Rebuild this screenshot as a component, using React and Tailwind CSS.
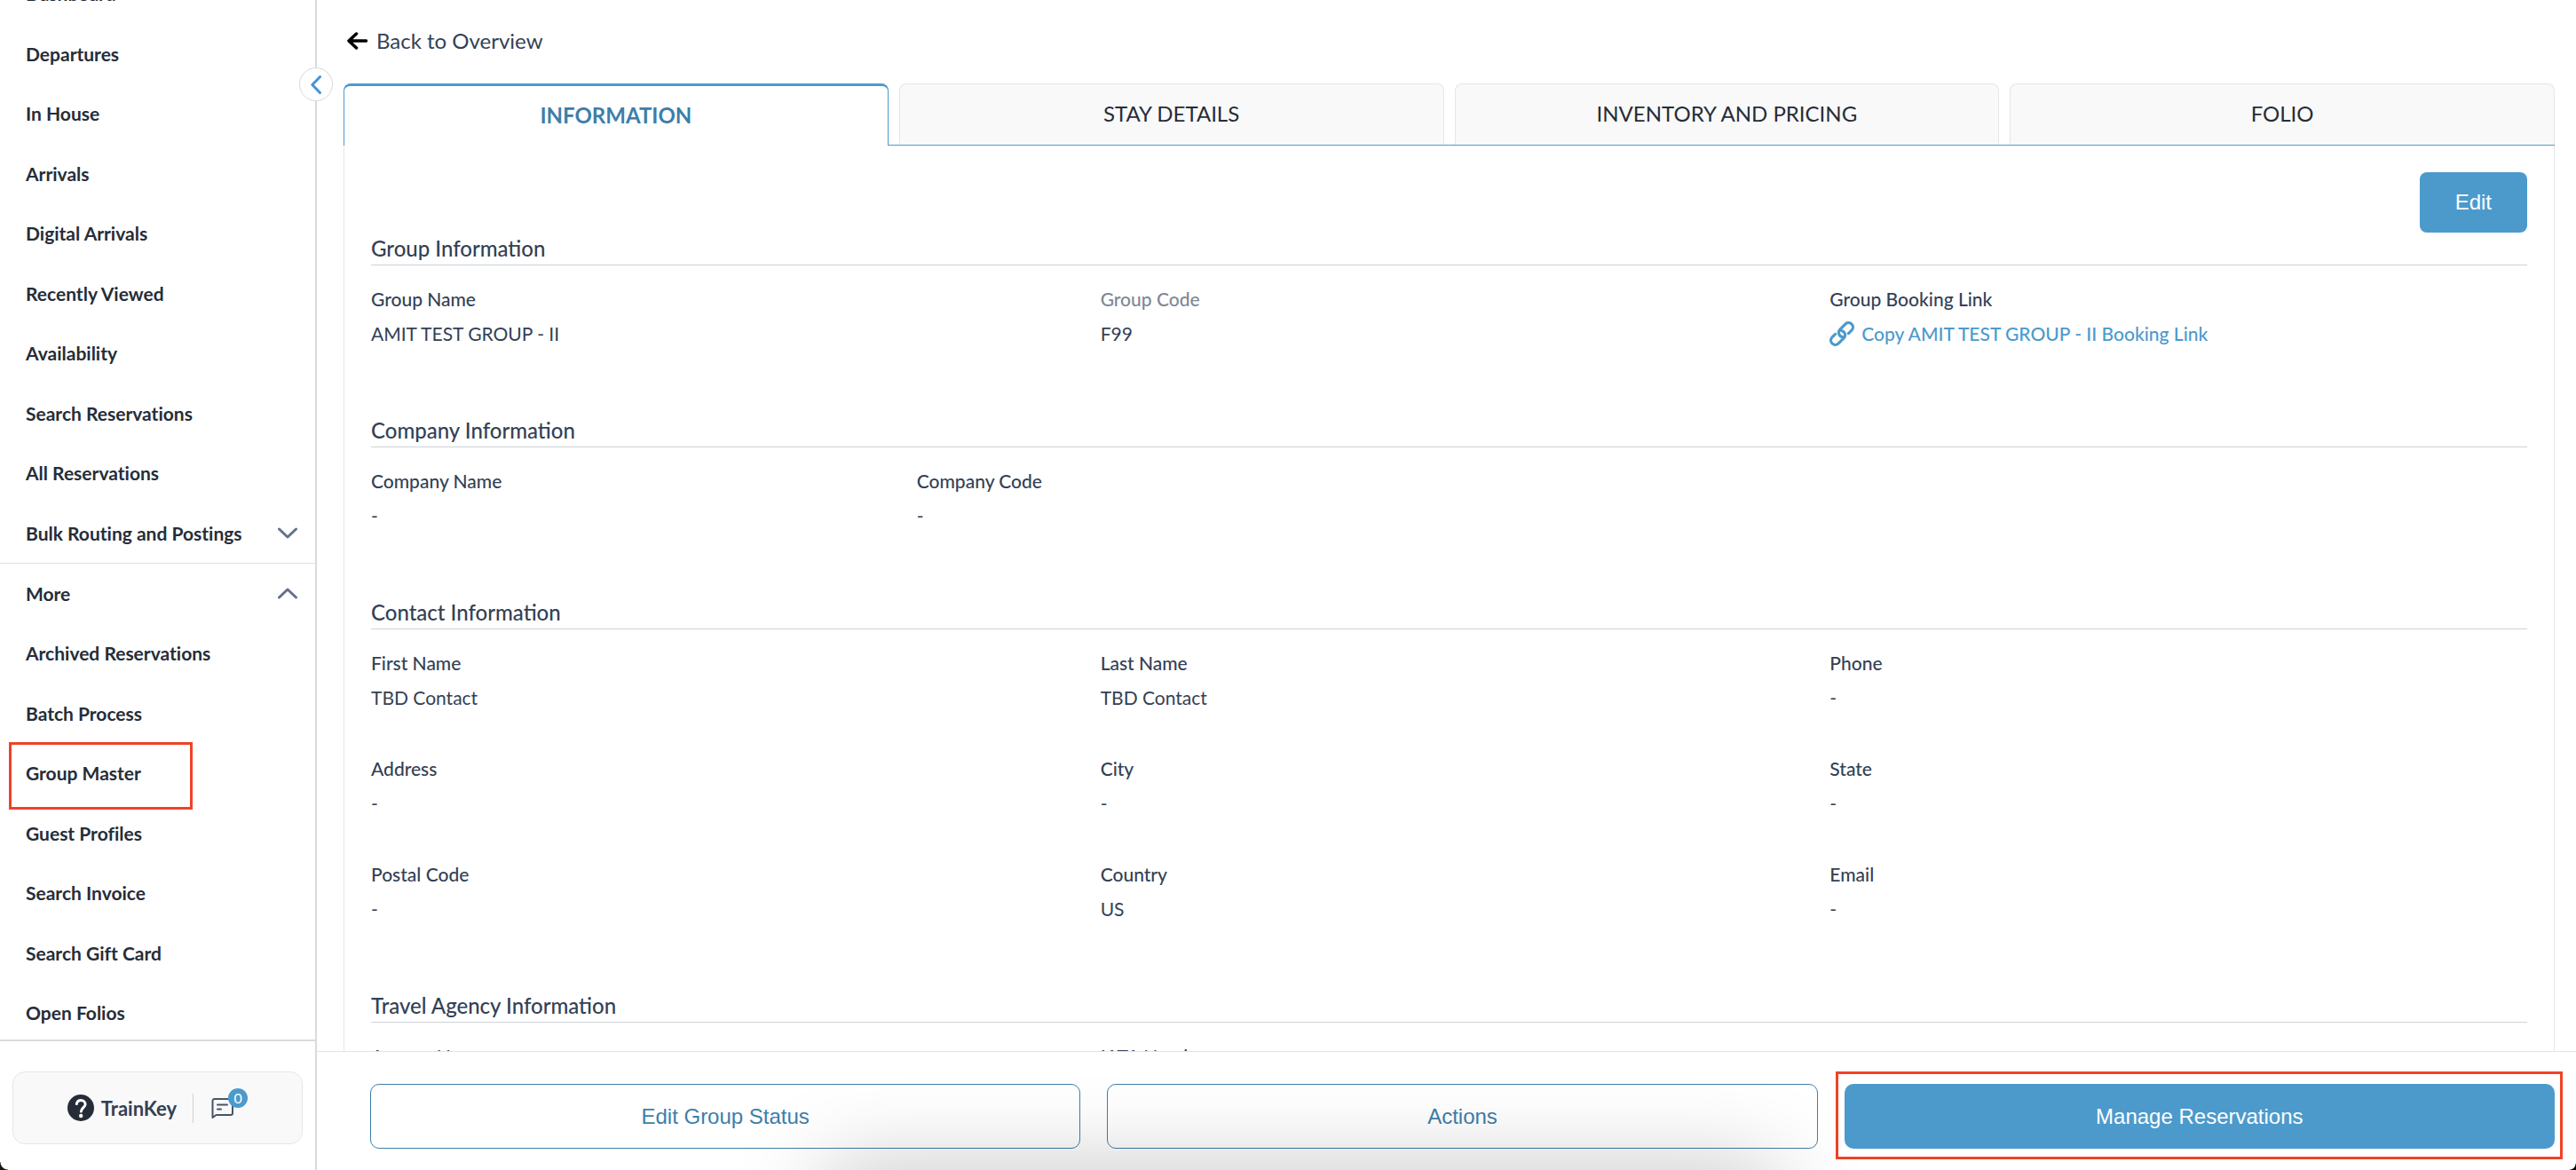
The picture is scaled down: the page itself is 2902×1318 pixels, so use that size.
import { useState } from "react";

const NAV = [
  { label: "Dashboard" },
  { label: "Departures" },
  { label: "In House" },
  { label: "Arrivals" },
  { label: "Digital Arrivals" },
  { label: "Recently Viewed" },
  { label: "Availability" },
  { label: "Search Reservations" },
  { label: "All Reservations" },
  { label: "Bulk Routing and Postings", toggle: "down", divider: true },
  { label: "More", toggle: "up" },
  { label: "Archived Reservations" },
  { label: "Batch Process" },
  { label: "Group Master", marked: true },
  { label: "Guest Profiles" },
  { label: "Search Invoice" },
  { label: "Search Gift Card" },
  { label: "Open Folios" },
];

const TABS = ["INFORMATION", "STAY DETAILS", "INVENTORY AND PRICING", "FOLIO"];

const SECTIONS = [
  {
    title: "Group Information",
    fields: [
      { label: "Group Name", value: "AMIT TEST GROUP - II" },
      { label: "Group Code", value: "F99", muted: true },
      { label: "Group Booking Link", link: "Copy AMIT TEST GROUP - II Booking Link" },
    ],
  },
  {
    title: "Company Information",
    wide: true,
    fields: [
      { label: "Company Name", value: "-" },
      { label: "Company Code", value: "-" },
    ],
  },
  {
    title: "Contact Information",
    fields: [
      { label: "First Name", value: "TBD Contact" },
      { label: "Last Name", value: "TBD Contact" },
      { label: "Phone", value: "-" },
      { label: "Address", value: "-" },
      { label: "City", value: "-" },
      { label: "State", value: "-" },
      { label: "Postal Code", value: "-" },
      { label: "Country", value: "US" },
      { label: "Email", value: "-" },
    ],
  },
  {
    title: "Travel Agency Information",
    fields: [
      { label: "Agency Name", value: "-" },
      { label: "IATA Number", value: "-" },
    ],
  },
];

function Chevron({ up }) {
  return (
    <svg width="22" height="13" viewBox="0 0 22 13" fill="none" stroke="#64708c" strokeWidth="3" strokeLinecap="round" strokeLinejoin="round">
      <path d={up ? "M1.5 11 11 2l9.5 9" : "M1.5 2 11 11l9.5-9"} />
    </svg>
  );
}

function LinkIcon() {
  return (
    <svg width="28" height="28" viewBox="-14 -14 28 28" fill="none" stroke="currentColor" strokeWidth="3.2" strokeLinecap="round" className="shrink-0">
      <g transform="rotate(-45)">
        <path d="M5.5 5H10.5a5 5 0 0 0 0-10H2a5 5 0 0 0-4 8" />
        <path d="M-5.5-5H-10.5a5 5 0 0 0 0 10H-2a5 5 0 0 0 4-8" />
      </g>
    </svg>
  );
}

function NavItem({ item }) {
  return (
    <li className={`relative ${item.divider ? "border-b border-[#dfe1e3]" : ""}`}>
      <a
        href="#"
        className="flex h-full items-center justify-between pl-[29px] pr-5 text-[21px] font-bold text-[#262d38] [font-variant-ligatures:none]"
      >
        {item.label}
        {item.toggle && <Chevron up={item.toggle === "up"} />}
      </a>
      {item.marked && (
        <span className="absolute -bottom-[7px] -top-px left-[10px] w-[207px] border-3 border-[#ef4327]" />
      )}
    </li>
  );
}

function Sidebar() {
  return (
    <aside className="relative flex w-[357px] shrink-0 flex-col border-r-2 border-[#d9dadc]">
      <nav className="flex min-h-0 flex-1 flex-col overflow-hidden">
        <ul className="-mb-1 -mt-[41px] grid min-h-0 flex-1 auto-rows-fr">
          {NAV.map((item) => (
            <NavItem key={item.label} item={item} />
          ))}
        </ul>
      </nav>

      {/* Help and messages */}
      <div className="border-t-2 border-[#d9dadc] px-[14px] pb-[29px] pt-[34px]">
        <div className="flex h-[82px] items-center justify-center rounded-[14px] border border-[#e4e7e7] bg-[#f9f9f9] pr-4">
          <button className="flex items-center gap-2 text-[22px] font-bold text-[#334155]">
            <svg width="30" height="30" viewBox="0 0 30 30">
              <circle cx="15" cy="15" r="15" fill="#262d38" />
              <path d="M10.3 10.6c.6-2.7 2.5-4 4.9-4 2.8 0 4.9 1.7 4.9 4.3 0 3.6-4.4 3.9-4.7 8.2" fill="none" stroke="#fff" strokeWidth="3" strokeLinecap="round" />
              <circle cx="15.2" cy="24" r="2.2" fill="#fff" />
            </svg>
            TrainKey
          </button>
          <span className="ml-[18px] h-[33px] w-px bg-[#cfd2d4]" />
          <button aria-label="Messages" className="relative ml-5">
            <svg width="25" height="25" viewBox="0 0 25 25" fill="none" stroke="#475569" strokeWidth="2" strokeLinejoin="round" strokeLinecap="round">
              <path d="M1.5 23V4a2 2 0 0 1 2-2h18.5a2 2 0 0 1 2 2v14a2 2 0 0 1-2 2H5.5z" />
              <path d="M7 8.5h11M7 13.5h4" />
            </svg>
            <span className="absolute -right-4 -top-[10px] flex size-[22px] items-center justify-center rounded-full bg-[#4c9acc] text-base leading-none text-white">
              0
            </span>
          </button>
        </div>
      </div>

      <button
        aria-label="Collapse menu"
        className="absolute -right-5 top-[76px] z-10 flex size-[38px] items-center justify-center rounded-full border border-[#d9dadc] bg-white"
      >
        <svg width="12" height="21" viewBox="0 0 12 21" fill="none" stroke="#4295d9" strokeWidth="3" strokeLinecap="round" strokeLinejoin="round">
          <path d="M10.5 1.5 1.8 10.5l8.7 9" />
        </svg>
      </button>
    </aside>
  );
}

function Field({ field }) {
  return (
    <div className="pb-[41px]">
      <dt className={`text-[21px] font-medium leading-[39px] ${field.muted ? "text-[#7f8794]" : "text-[#334155]"}`}>
        {field.label}
      </dt>
      <dd className="text-[21px] leading-[39px] text-[#334155]">
        {field.link ? (
          <a href="#" className="flex items-center gap-2 font-medium text-[#4c9acc]">
            <LinkIcon />
            {field.link}
          </a>
        ) : (
          field.value
        )}
      </dd>
    </div>
  );
}

function Section({ section }) {
  return (
    <section className="mb-[31px]">
      <h2 className="border-b border-[#ced3d7] text-2xl font-medium leading-9 text-[#334155]">
        {section.title}
      </h2>
      <dl className={`mt-[18px] grid ${section.wide ? "grid-cols-4 gap-x-[30px]" : "grid-cols-3 gap-x-9"}`}>
        {section.fields.map((f) => (
          <Field key={f.label} field={f} />
        ))}
      </dl>
    </section>
  );
}

export default function App() {
  const [tab, setTab] = useState("INFORMATION");

  return (
    <div className="relative flex h-screen overflow-hidden bg-white font-['Lato',sans-serif]">
      <Sidebar />

      <div className="flex min-w-0 flex-1 flex-col">
        <main className="flex min-h-0 flex-1 flex-col overflow-hidden pl-[30px] pr-6">
          <a href="#" className="mb-7 mt-[26px] flex items-center gap-[10px] pl-1 text-2xl leading-10 text-[#334155]">
            <svg width="23" height="20" viewBox="0 0 23 20" fill="none" stroke="#000" strokeWidth="3.5" strokeLinecap="round" strokeLinejoin="round">
              <path d="M10.5 2 2 10l8.5 8M2.5 10h19" />
            </svg>
            Back to Overview
          </a>

          {/* Tabs */}
          <div role="tablist" className="grid shrink-0 grid-cols-4 gap-3 border-b border-[#4c9acc]">
            {TABS.map((t) => (
              <button
                key={t}
                role="tab"
                aria-selected={t === tab}
                onClick={() => setTab(t)}
                className={
                  t === tab
                    ? "-mb-px h-[70px] rounded-t-lg border-x border-t-3 border-[#4c9acc] bg-white pb-0.5 text-2xl font-bold text-[#3d7ea9]"
                    : "h-[69px] rounded-t-lg border-x border-t border-[#e5e7e8] bg-[#f9f9f9] pb-0.5 text-2xl text-[#262d38]"
                }
              >
                {t}
              </button>
            ))}
          </div>

          {/* Group details */}
          <div className="shrink-0 border-x border-[#e4e7e7] px-[30px] pt-[30px]">
            <div className="flex justify-end">
              <button className="h-[68px] rounded-lg bg-[#4c9acc] px-10 font-['Liberation_Sans',sans-serif] text-2xl text-white">
                Edit
              </button>
            </div>
            {SECTIONS.map((s) => (
              <Section key={s.title} section={s} />
            ))}
          </div>
        </main>

        {/* Actions bar */}
        <footer className="grid grid-cols-3 gap-[30px] border-t border-[#e1e4e5] bg-white pb-6 pl-[60px] pr-6 pt-9 font-['Liberation_Sans',sans-serif] text-2xl">
          <button className="h-[73px] rounded-[10px] border border-[#3d7ea9] text-[#3d7ea9]">
            Edit Group Status
          </button>
          <button className="h-[73px] rounded-[10px] border border-[#3d7ea9] text-[#3d7ea9]">
            Actions
          </button>
          <div className="relative">
            <button className="h-[73px] w-full rounded-[10px] bg-[#4c9acc] text-white">
              Manage Reservations
            </button>
            <span className="pointer-events-none absolute -bottom-3 -left-[10px] -right-[9px] -top-[14px] border-3 border-[#ef4327]" />
          </div>
        </footer>
      </div>

      {/* Soft shade along the bottom edge and the dark window corners */}
      <div className="pointer-events-none absolute -bottom-20 left-[32%] right-[31%] h-20 shadow-[0_0_100px_0_rgba(0,0,0,0.25)]" />
      <div className="pointer-events-none absolute bottom-0 left-0 size-[9px] bg-[radial-gradient(circle_at_top_right,transparent_8px,#15180f_9px)]" />
      <div className="pointer-events-none absolute bottom-0 right-0 size-[7px] bg-[radial-gradient(circle_at_top_left,transparent_6px,#000_7px)]" />
    </div>
  );
}
